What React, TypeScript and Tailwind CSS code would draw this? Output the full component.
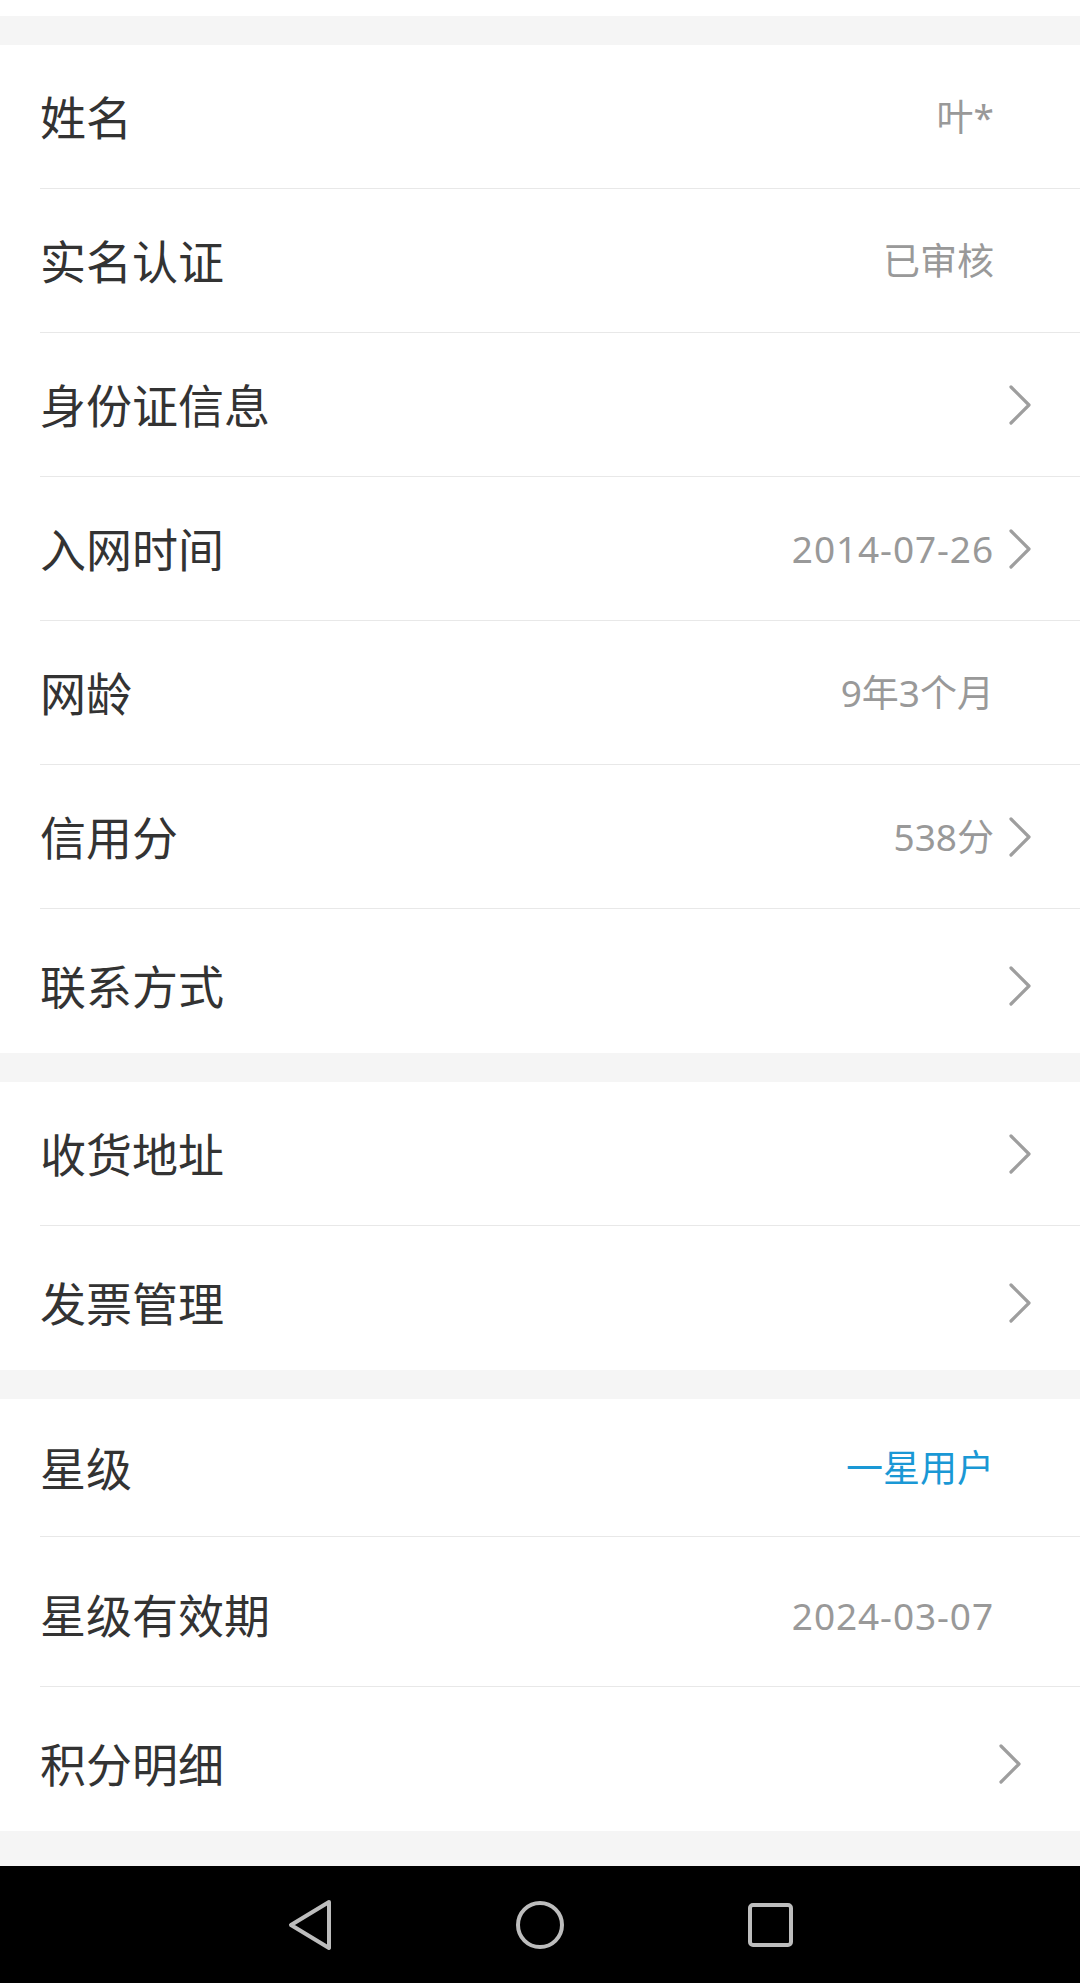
import React from 'react';

type Item = {
  label: string;
  value?: string;
  arrow?: boolean;
  blue?: boolean;
  wide?: boolean;
  h?: string;
  shift?: boolean;
};

const sections: Item[][] = [
  [
    { label: '姓名', value: '叶*' },
    { label: '实名认证', value: '已审核' },
    { label: '身份证信息', arrow: true },
    { label: '入网时间', value: '2014-07-26', arrow: true, wide: true },
    { label: '网龄', value: '9年3个月' },
    { label: '信用分', value: '538分', arrow: true },
    { label: '联系方式', arrow: true },
  ],
  [
    { label: '收货地址', arrow: true },
    { label: '发票管理', arrow: true },
  ],
  [
    { label: '星级', value: '一星用户', blue: true, h: 'h-[138px]' },
    { label: '星级有效期', value: '2024-03-07', wide: true, h: 'h-[150px] pt-[7px]' },
    { label: '积分明细', arrow: true, shift: true },
  ],
];

function Chevron() {
  return (
    <svg width="24" height="40" viewBox="0 0 24 40" fill="none">
      <path d="M3 2 L21 20 L3 38" stroke="#9e9e9e" strokeWidth="3.2" strokeLinecap="round" strokeLinejoin="round" />
    </svg>
  );
}

function Row({ item, last }: { item: Item; last: boolean }) {
  return (
    <div className="pl-10">
      <div
        className={`flex items-center justify-between ${item.h ?? 'h-[144px]'} ${
          last ? 'pt-[10px]' : 'border-b border-[#e8e8e8]'
        } ${item.shift ? 'pr-[58px]' : 'pr-12'}`}
      >
        <span className="text-[46px] leading-none text-[#333333]">{item.label}</span>
        <div className="flex items-center">
          {item.value && (
            <span
              className={`text-[37px] leading-none ${item.wide ? 'tracking-[0.9px]' : ''} ${
                item.blue ? 'text-[#1a98d5]' : 'text-[#999999]'
              }`}
            >
              {item.value}
            </span>
          )}
          <div className="flex w-[38px] justify-end">{item.arrow && <Chevron />}</div>
        </div>
      </div>
    </div>
  );
}

export default function App() {
  return (
    <div
      className="flex h-[1983px] w-[1080px] flex-col bg-[#f5f5f5]"
      style={{ fontFamily: '"Noto Sans", "Noto Sans CJK SC", sans-serif' }}
    >
      <div className="h-[16px] bg-white" />
      <div className="flex flex-col gap-[29px] pt-[29px]">
        {sections.map((sec, i) => (
          <div key={i} className="bg-white">
            {sec.map((item, j) => (
              <Row key={item.label} item={item} last={j === sec.length - 1} />
            ))}
          </div>
        ))}
      </div>
      <div className="flex-1" />
      <div className="flex h-[117px] items-center justify-center gap-[184px] bg-black">
        <svg width="44" height="52" viewBox="0 0 44 52" fill="none">
          <path d="M41 3 L3 26 L41 49 Z" stroke="#bdbdbd" strokeWidth="4" strokeLinejoin="round" />
        </svg>
        <div className="h-[48px] w-[48px] rounded-full border-[4px] border-[#bdbdbd]" />
        <div className="h-[44px] w-[45px] rounded-[5px] border-[4px] border-[#bdbdbd]" />
      </div>
    </div>
  );
}
